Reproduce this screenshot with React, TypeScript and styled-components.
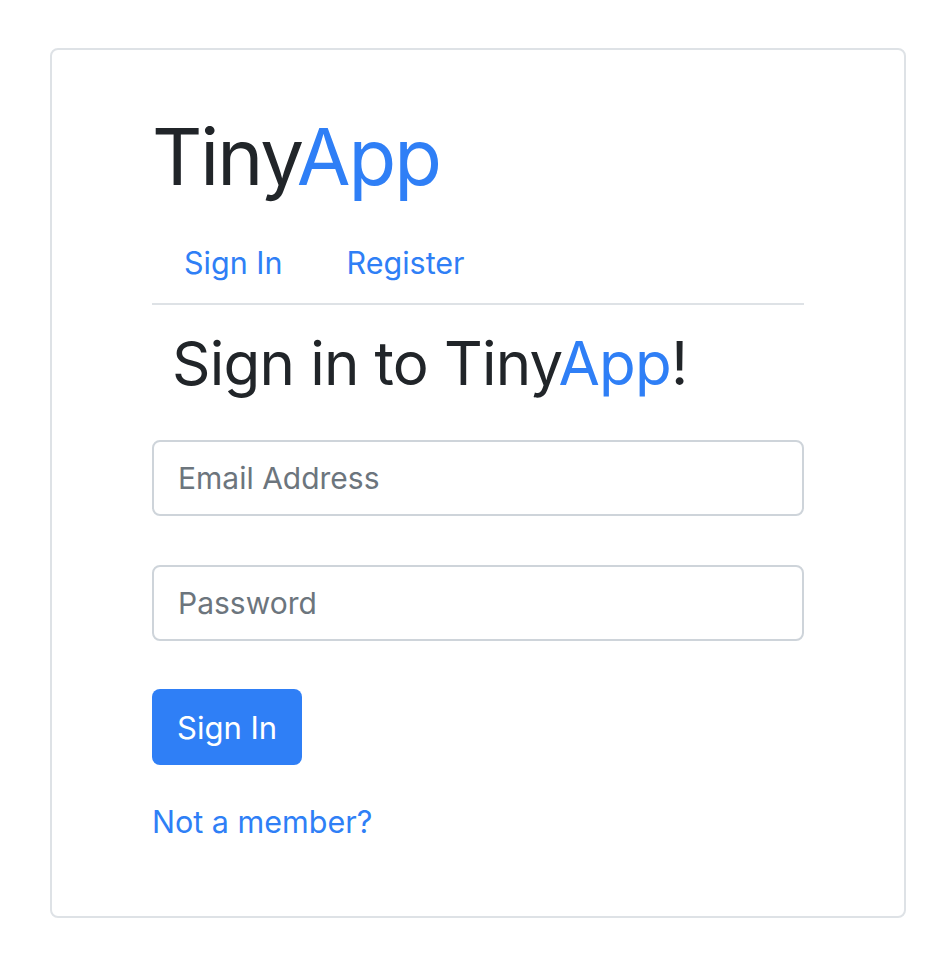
import React from "react";
import styled, { createGlobalStyle } from "styled-components";

const Global = createGlobalStyle`
  html, body { margin: 0; padding: 0; background: #fff; }
  body { font-family: Inter, "Noto Sans", sans-serif; color: #212529; }
  * { box-sizing: border-box; }
`;

const Page = styled.div`
  padding: 48px 0 0 50px;
`;

const Card = styled.div`
  width: 856px;
  height: 870px;
  border: 2px solid #dee2e6;
  border-radius: 8px;
  padding: 0 100px 0 100px;
`;

const Brand = styled.h1`
  margin: 0;
  padding-top: 59px;
  font-size: 78px;
  font-weight: 400;
  line-height: 96px;
  letter-spacing: -2px;
  color: #212529;
`;

const Accent = styled.span`
  color: #2f7ff6;
`;

const Nav = styled.nav`
  display: flex;
  margin-top: 18px;
  border-bottom: 2px solid #dee2e6;
  width: 652px;
`;

const NavLink = styled.a`
  display: block;
  padding: 16px 32px;
  font-size: 30.5px;
  line-height: 48px;
  color: #2f7ff6;
  text-decoration: none;
`;

const Heading = styled.h2`
  margin: 22px 0 0 20px;
  font-size: 60px;
  font-weight: 400;
  line-height: 72px;
  letter-spacing: -0.8px;
  color: #212529;
`;

const Form = styled.form`
  display: flex;
  flex-direction: column;
  align-items: flex-start;
  margin-top: 41px;
  width: 652px;
`;

const Input = styled.input<{ $mb: number }>`
  width: 100%;
  height: 76px;
  padding: 12px 24px;
  border: 2px solid #ced4da;
  border-radius: 8px;
  font-family: inherit;
  font-size: 30px;
  color: #495057;
  margin-bottom: ${(p) => p.$mb}px;
  outline: none;
  &::placeholder { color: #6c757d; }
`;

const Button = styled.button`
  height: 76px;
  padding: 0 25px;
  background: #2f7ff6;
  border: none;
  border-radius: 8px;
  color: #fff;
  font-family: inherit;
  font-size: 31px;
`;

const MemberLink = styled.a`
  display: block;
  margin-top: 33px;
  font-size: 30.5px;
  line-height: 48px;
  color: #2f7ff6;
  text-decoration: none;
`;

export default function App() {
  return (
    <>
      <Global />
      <Page>
        <Card>
          <Brand>
            Tiny<Accent>App</Accent>
          </Brand>
          <Nav>
            <NavLink href="#">Sign In</NavLink>
            <NavLink href="#">Register</NavLink>
          </Nav>
          <Heading>
            Sign in to Tiny<Accent>App</Accent>!
          </Heading>
          <Form onSubmit={(e) => e.preventDefault()}>
            <Input $mb={49} type="email" placeholder="Email Address" />
            <Input $mb={48} type="password" placeholder="Password" />
            <Button type="submit">Sign In</Button>
          </Form>
          <MemberLink href="#">Not a member?</MemberLink>
        </Card>
      </Page>
    </>
  );
}
